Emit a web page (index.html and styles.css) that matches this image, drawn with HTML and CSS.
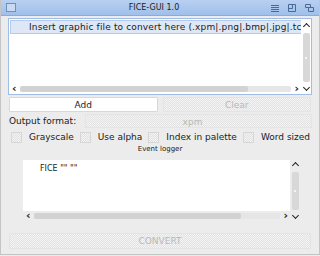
FILE: index.html
```html
<!DOCTYPE html>
<html lang="en">
<head>
    <meta charset="UTF-8">
    <title>FICE-GUI 1.0</title>
    <link rel="stylesheet" href="styles.css">
</head>
<body>
    <div class="window">
        <div class="titlebar">
            <span class="win-icon"></span>
            <span class="title">FICE-GUI 1.0</span>
            <span class="tb-buttons">
                <svg width="10" height="10" viewBox="0 0 10 10"><path d="M1 2.5h8M1 4.5h8M1 6.5h8M1 8.5h8" stroke="#4a6a96" stroke-width="1"/></svg>
                <svg width="10" height="10" viewBox="0 0 10 10"><path d="M1.5 1.5h7v7h-7zM1.5 5.5h4v-4" fill="none" stroke="#4a6a96" stroke-width="1"/></svg>
                <svg width="11" height="10" viewBox="0 0 11 10"><path d="M1.5 1.5h5v3h-5zM4.5 4.5h5v4h-5z" fill="none" stroke="#4a6a96" stroke-width="1"/></svg>
            </span>
        </div>

        <div class="content">
            <!-- File list -->
            <div class="listbox">
                <div class="list-main">
                    <div class="list-header">Insert graphic file to convert here (.xpm|.png|.bmp|.jpg|.tc</div>
                    <div class="list-body"></div>
                    <div class="hscroll">
                        <span class="arrow">&lsaquo;</span>
                        <span class="htrack"><span class="hhandle"></span></span>
                        <span class="arrow">&rsaquo;</span>
                    </div>
                </div>
                <div class="vscroll">
                    <span class="varrow up"></span>
                    <span class="vtrack"><span class="vdot"></span></span>
                    <span class="varrow down"></span>
                </div>
            </div>

            <div class="btn-row">
                <button class="btn">Add</button>
                <button class="btn disabled">Clear</button>
            </div>

            <div class="format-row">
                <span class="label">Output format:</span>
                <div class="combo disabled">xpm</div>
            </div>

            <div class="check-row">
                <label class="check"><span class="box"></span>Grayscale</label>
                <label class="check"><span class="box"></span>Use alpha</label>
                <label class="check"><span class="box"></span>Index in palette</label>
                <label class="check"><span class="box"></span>Word sized</label>
            </div>

            <div class="group-title">Event logger</div>

            <!-- Event logger -->
            <div class="logger">
                <div class="log-main">
                    <div class="log-body">FICE "" ""</div>
                    <div class="hscroll">
                        <span class="arrow">&lsaquo;</span>
                        <span class="htrack"><span class="hhandle"></span></span>
                        <span class="arrow">&rsaquo;</span>
                    </div>
                </div>
                <div class="vscroll">
                    <span class="varrow up"></span>
                    <span class="vtrack"><span class="vdot"></span></span>
                    <span class="varrow down"></span>
                </div>
            </div>

            <button class="btn convert disabled">CONVERT</button>
        </div>
    </div>
</body>
</html>
```

FILE: styles.css
```css
body {
    margin: 0;
    font-family: "DejaVu Sans", sans-serif;
    font-size: 9px;
    color: #222;
    background: #ececec;
}

.window {
    width: 320px;
    height: 255px;
    box-sizing: border-box;
    border-left: 1px solid #c4c4c4;
    border-right: 1px solid #c4c4c4;
    border-bottom: 1px solid #c4c4c4;
    background: #ececec;
}

.titlebar {
    height: 16px;
    display: flex;
    align-items: center;
    padding: 0 4px 0 5px;
    background: linear-gradient(#b8d0f2, #a0bfea);
    border-bottom: 1px solid #8eabd6;
    box-sizing: border-box;
}

.win-icon {
    width: 8px;
    height: 7px;
    border: 1px solid #6f8fbf;
    background: #c9daf2;
}

.title {
    flex: 1;
    text-align: center;
    font-size: 8px;
    color: #1c1c1c;
    padding-left: 22px;
}

.tb-buttons {
    display: flex;
    gap: 7px;
    align-items: center;
}

.content {
    padding: 2px 7px 0 7px;
    display: flex;
    flex-direction: column;
}

/* list box */
.listbox {
    height: 77px;
    display: flex;
    border: 1px solid #9fbde6;
    background: #fff;
    box-sizing: border-box;
}

.list-main, .log-main {
    flex: 1;
    display: flex;
    flex-direction: column;
    min-width: 0;
}

.list-header {
    height: 14px;
    line-height: 13px;
    margin: 1px 0 0 1px;
    padding-left: 18px;
    background: #dde7f6;
    border: 1px solid #b6cbe9;
    border-right: none;
    white-space: nowrap;
    overflow: hidden;
    letter-spacing: 0.15px;
    box-sizing: border-box;
    color: #1a1a1a;
}

.list-body {
    flex: 1;
}

.hscroll {
    height: 8px;
    display: flex;
    align-items: center;
    gap: 3px;
    padding: 0 2px 0 3px;
    margin-bottom: 1px;
}

.arrow {
    font-size: 11px;
    line-height: 8px;
    font-weight: bold;
    color: #222;
}

.htrack {
    flex: 1;
    height: 6px;
    background: #e6e6e6;
    border-radius: 2px;
    display: flex;
}

.hhandle {
    width: 84%;
    background: #d2d2d2;
    border-radius: 2px;
}

.vscroll {
    width: 10px;
    display: flex;
    flex-direction: column;
    align-items: center;
    padding: 3px 0 2px;
    box-sizing: border-box;
}

.varrow {
    width: 4px;
    height: 4px;
    border-left: 1.5px solid #222;
    border-top: 1.5px solid #222;
}

.varrow.up {
    transform: rotate(45deg);
    margin-top: 2px;
}

.varrow.down {
    transform: rotate(225deg);
    margin-bottom: 2px;
}

.vtrack {
    flex: 1;
    width: 7px;
    margin: 4px 0 3px;
    background: #d8d8d8;
    border-radius: 2px;
    display: flex;
    justify-content: center;
    align-items: center;
}

.vdot {
    width: 2px;
    height: 2px;
    background: #f4f4f4;
}

/* buttons */
.btn-row {
    display: flex;
    gap: 5px;
    margin-top: 2px;
    padding: 0 1px;
}

.btn {
    flex: 1;
    height: 15px;
    padding: 0;
    font-family: "DejaVu Sans", sans-serif;
    font-size: 9px;
    color: #222;
    background: #fff;
    border: 1px solid #d8d8d8;
    border-radius: 1px;
}

.disabled {
    color: #b8b8b8;
    background: repeating-conic-gradient(#e2e2e2 0 25%, #f4f4f4 0 50%) 0 0 / 2px 2px;
    border-color: #e4e4e4;
}

.format-row {
    display: flex;
    align-items: center;
    margin-top: 2px;
    padding-left: 1px;
    height: 14px;
}

.label {
    width: 76px;
}

.combo {
    flex: 1;
    height: 14px;
    line-height: 14px;
    text-align: center;
    box-sizing: border-box;
    border: 1px solid #e4e4e4;
    padding-right: 12px;
}

.check-row {
    display: flex;
    align-items: center;
    margin-top: 3px;
    padding-left: 3px;
    height: 12px;
    white-space: nowrap;
}

.check {
    display: flex;
    align-items: center;
    margin-right: 6px;
}

.box {
    width: 11px;
    height: 11px;
    box-sizing: border-box;
    margin-right: 7px;
    border: 1px solid #d6d6d6;
    background: repeating-conic-gradient(#e0e0e0 0 25%, #f4f4f4 0 50%) 0 0 / 2px 2px;
}

.group-title {
    text-align: center;
    font-size: 7px;
    margin-top: 2px;
    color: #222;
}

/* logger */
.logger {
    height: 62px;
    display: flex;
    margin: 7px 12px 0 15px;
}

.log-body {
    flex: 1;
    background: #fff;
    padding: 4px 0 0 17px;
    font-size: 8px;
}

.logger .hscroll {
    height: 10px;
    padding-left: 3px;
}

.logger .vscroll {
    padding-top: 1px;
}

.convert {
    flex: none;
    margin: 11px 1px 0;
    height: 16px;
}
```
